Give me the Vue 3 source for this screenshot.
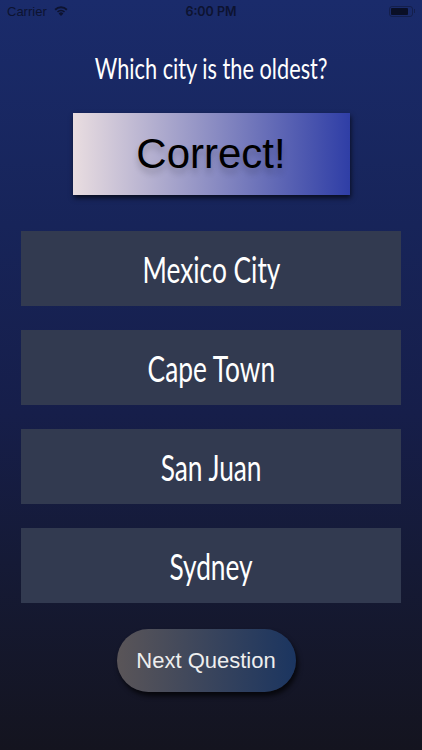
<template>
  <div class="screen">
    <div class="status-bar">
      <div class="status-left">
        <span>Carrier</span>
        <svg class="wifi" width="14" height="10" viewBox="0 0 14 10">
          <path d="M7 10 L4.6 7.4 A3.5 3.5 0 0 1 9.4 7.4 Z" fill="#0d1330" />
          <path d="M2.9 5.4 A6 6 0 0 1 11.1 5.4 L9.9 6.6 A4.3 4.3 0 0 0 4.1 6.6 Z" fill="#0d1330" />
          <path d="M0.5 3 A9.3 9.3 0 0 1 13.5 3 L12.2 4.4 A7.5 7.5 0 0 0 1.8 4.4 Z" fill="#0d1330" />
        </svg>
      </div>
      <div class="status-time">6:00 PM</div>
      <div class="status-right">
        <div class="battery"><div class="battery-fill"></div></div>
        <div class="battery-cap"></div>
      </div>
    </div>

    <div class="question"><span>Which city is the oldest?</span></div>

    <div class="result"><span>Correct!</span></div>

    <div class="options">
      <div v-for="city in cities" :key="city" class="option"><span>{{ city }}</span></div>
    </div>

    <button class="next">Next Question</button>
  </div>
</template>

<script setup>
const cities = ['Mexico City', 'Cape Town', 'San Juan', 'Sydney'];
</script>

<style scoped>
.screen {
  width: 422px;
  height: 750px;
  overflow: hidden;
  display: flex;
  flex-direction: column;
  align-items: center;
  background: linear-gradient(180deg, #1a2b6b 0%, #172459 30%, #161e4a 55%, #151a36 75%, #14141f 100%);
  font-family: 'Liberation Sans', Arial, sans-serif;
}

.status-bar {
  width: 100%;
  height: 22px;
  padding: 0 7px;
  box-sizing: border-box;
  display: grid;
  grid-template-columns: 1fr auto 1fr;
  align-items: center;
  color: #0d1330;
}

.status-left {
  display: flex;
  align-items: center;
  gap: 7px;
  font-size: 13px;
}

.status-time {
  font-family: Inter, 'Liberation Sans', sans-serif;
  font-weight: 600;
  font-size: 12.5px;
}

.status-right {
  display: flex;
  align-items: center;
  justify-content: flex-end;
}

.battery {
  width: 24px;
  height: 11px;
  box-sizing: border-box;
  border: 1px solid rgba(13, 19, 48, 0.5);
  border-radius: 3px;
  padding: 1px;
}

.battery-fill {
  width: 17px;
  height: 100%;
  background: #0a0f26;
  border-radius: 1px;
}

.battery-cap {
  width: 1px;
  height: 4px;
  margin-left: 1px;
  background: rgba(13, 19, 48, 0.5);
}

/* no handwriting font available, so Lato squeezed to the same width */
.question span,
.option span {
  display: inline-block;
  font-family: Lato, 'Open Sans', sans-serif;
  white-space: nowrap;
}

.question span {
  transform: scaleX(0.75);
}

.option span {
  transform: scaleX(0.73);
}

.question {
  margin-top: 27px;
  height: 38px;
  line-height: 38px;
  color: #fff;
  font-size: 29px;
}

.result {
  margin-top: 26px;
  width: 277px;
  height: 82px;
  flex-shrink: 0;
  display: flex;
  align-items: center;
  justify-content: center;
  background: linear-gradient(90deg, #e9dde0 0%, #2f3ea6 100%);
  box-shadow: 1px 3px 5px rgba(0, 0, 0, 0.65);
  color: #000;
  font-size: 42px;
  text-shadow: 0 5px 6px rgba(0, 0, 0, 0.2);
}

.options {
  margin-top: 36px;
  display: flex;
  flex-direction: column;
  gap: 24px;
}

.option {
  width: 380px;
  height: 75px;
  display: flex;
  align-items: center;
  justify-content: center;
  background: #323a50;
  color: #fff;
  font-size: 36px;
}

.next {
  margin-top: 26px;
  margin-right: 10px;
  width: 179px;
  height: 63px;
  flex-shrink: 0;
  border: none;
  border-radius: 32px;
  background: linear-gradient(90deg, #5a5558 0%, #1b3560 100%);
  box-shadow: 2px 4px 5px rgba(0, 0, 0, 0.7);
  color: #eee;
  font-family: 'Liberation Sans', Arial, sans-serif;
  font-size: 22px;
}
</style>
